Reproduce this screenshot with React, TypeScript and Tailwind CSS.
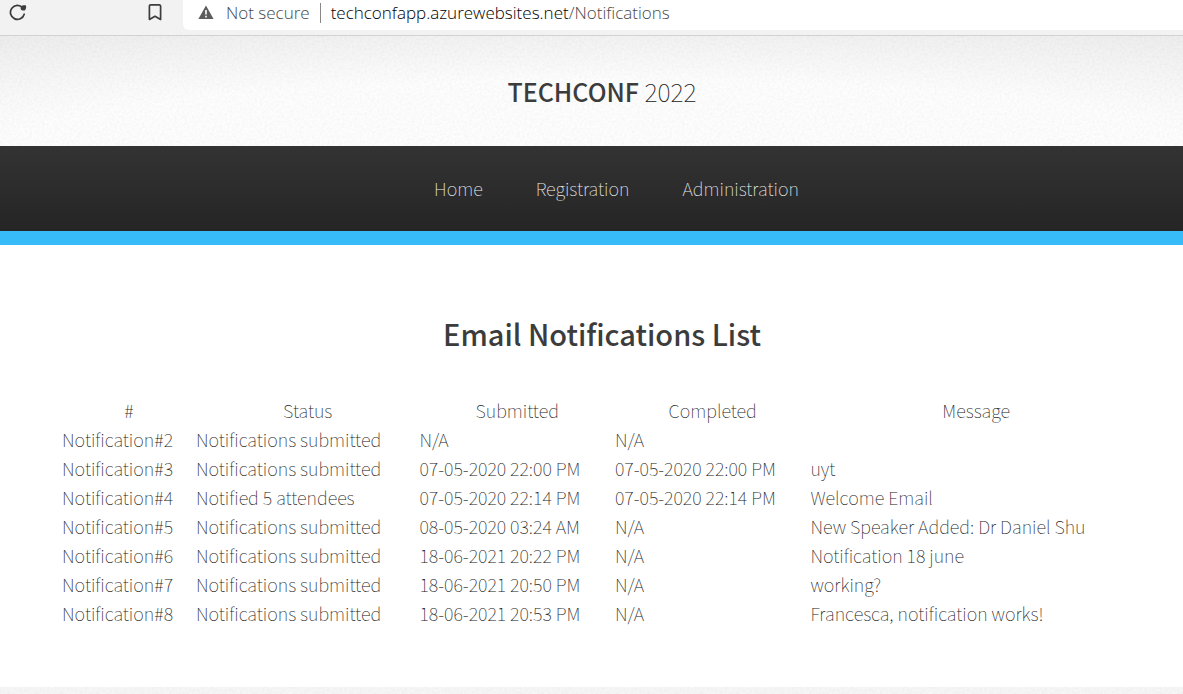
const bodyFont = "font-['Noto_Sans_CJK_SC','Open_Sans',sans-serif]";

const links = ['Home', 'Registration', 'Administration'];

const columns = [
  { label: '#', width: 'w-[12.4%]' },
  { label: 'Status', width: 'w-[20.7%]' },
  { label: 'Submitted', width: 'w-[18.1%]' },
  { label: 'Completed', width: 'w-[18.1%]' },
  { label: 'Message', width: 'w-[30.7%]' },
];

const rows = [
  ['Notification#2', 'Notifications submitted', 'N/A', 'N/A', ''],
  ['Notification#3', 'Notifications submitted', '07-05-2020 22:00 PM', '07-05-2020 22:00 PM', 'uyt'],
  ['Notification#4', 'Notified 5 attendees', '07-05-2020 22:14 PM', '07-05-2020 22:14 PM', 'Welcome Email'],
  ['Notification#5', 'Notifications submitted', '08-05-2020 03:24 AM', 'N/A', 'New Speaker Added: Dr Daniel Shu'],
  ['Notification#6', 'Notifications submitted', '18-06-2021 20:22 PM', 'N/A', 'Notification 18 june'],
  ['Notification#7', 'Notifications submitted', '18-06-2021 20:50 PM', 'N/A', 'working?'],
  ['Notification#8', 'Notifications submitted', '18-06-2021 20:53 PM', 'N/A', 'Francesca, notification works!'],
];

function Grain({ id }: { id: string }) {
  return (
    <svg className="pointer-events-none absolute inset-0 h-full w-full opacity-3" aria-hidden="true">
      <filter id={id}>
        <feTurbulence type="fractalNoise" baseFrequency="0.4" numOctaves="2" />
        <feColorMatrix type="matrix" values="0 0 0 0 0  0 0 0 0 0  0 0 0 0 0  1.6 0 0 0 -0.5" />
      </filter>
      <rect width="100%" height="100%" filter={`url(#${id})`} />
    </svg>
  );
}

function BrowserBar() {
  return (
    <div className="flex h-9 items-start border-b border-[#d2d2d2] bg-[#f2f2f2] font-['Open_Sans',sans-serif]">
      <div className="flex w-[183px] shrink-0 items-center justify-between pt-1 pr-5 pl-2">
        <button type="button" aria-label="Reload" className="text-[#3c3c3c]">
          <svg width="19" height="17" viewBox="0 0 19 17" fill="none">
            <path d="M16.200 10.200A7 7 0 1 1 14.600 3.600" stroke="currentColor" strokeWidth="1.700" strokeLinecap="round" />
            <path d="M13.200 2.200C14.500 1 17.200.900 17.900 1.500c.6.7.2 3.900-.9 4.700-1.100.6-3.700 0-4.100-.8-.4-.9-.3-2.500.3-3.200z" fill="currentColor" />
          </svg>
        </button>
        <button type="button" aria-label="Bookmark" className="text-[#3c3c3c]">
          <svg width="16" height="17" viewBox="0 0 16 17" fill="none" stroke="currentColor" strokeWidth="1.7" strokeLinejoin="round">
            <path d="M3.600.9h8.800a1.200 1.200 0 0 1 1.200 1.200v13.300L8 12.300l-5.600 3.100V2.100A1.200 1.200 0 0 1 3.600.9z" />
          </svg>
        </button>
      </div>
      <div className="flex h-[30px] flex-1 items-center rounded-bl-md bg-white pb-[5px] pl-[15px] text-[17px] leading-6 font-light">
        <svg width="16" height="15" viewBox="0 0 16 15" aria-hidden="true">
          <path d="M8 .5 15.600 14H.4z" fill="#5c5c5c" />
          <path d="M7.200 5h1.600v4.600H7.200zM7.200 10.800h1.600v1.700H7.200z" fill="#fff" />
        </svg>
        <span className="ml-3 text-[#45484c]">Not secure</span>
        <span className="mx-[10px] h-5 w-px bg-[#888]" />
        <span className="text-black">
          techconfapp.azurewebsites.net<span className="text-[#4a4a4a]">/Notifications</span>
        </span>
      </div>
    </div>
  );
}

export default function App() {
  return (
    <div className={`flex min-h-screen flex-col bg-white font-thin text-[#222] ${bodyFont}`}>
      <BrowserBar />
      <header className="relative flex h-[110px] items-center justify-center bg-[radial-gradient(ellipse_100%_120%_at_51%_100%,#fdfdfd_50%,#ececec_100%)] pl-[21px]">
        <Grain id="header-grain" />
        <h1 className="relative text-[25px] leading-9">
          <a href="#home">
            <strong className="font-medium text-[#3c3c3c]">TECHCONF</strong> 2022
          </a>
        </h1>
      </header>
      <nav className="flex h-[85px] items-center justify-center gap-[53px] bg-linear-to-b from-[#333] to-[#252525] pb-px pl-[50px] text-lg text-[#f0f0f0]">
        {links.map((link) => (
          <a key={link} href={`#${link.toLowerCase()}`}>
            {link}
          </a>
        ))}
      </nav>
      <div className="h-[14px] bg-[#37bcf9]" />
      <main className="flex-1 pt-16 pr-[41px] pb-14 pl-[62px]">
        <h2 className="text-center text-[29px] leading-12 font-medium text-[#3c3c3c]">Email Notifications List</h2>
        <table className="mt-[39px] w-full table-fixed border-collapse text-lg leading-[29px]">
          <thead>
            <tr>
              {columns.map((column) => (
                <th key={column.label} scope="col" className={`p-0 text-center font-thin ${column.width}`}>
                  {column.label}
                </th>
              ))}
            </tr>
          </thead>
          <tbody>
            {rows.map((row) => (
              <tr key={row[0]} className="h-[29px]">
                {row.map((cell, i) => (
                  <td key={i} className="p-0 whitespace-nowrap">
                    {cell}
                  </td>
                ))}
              </tr>
            ))}
          </tbody>
        </table>
      </main>
      <footer className="relative h-[7px] bg-[#f6f6f6]">
        <Grain id="footer-grain" />
      </footer>
    </div>
  );
}
